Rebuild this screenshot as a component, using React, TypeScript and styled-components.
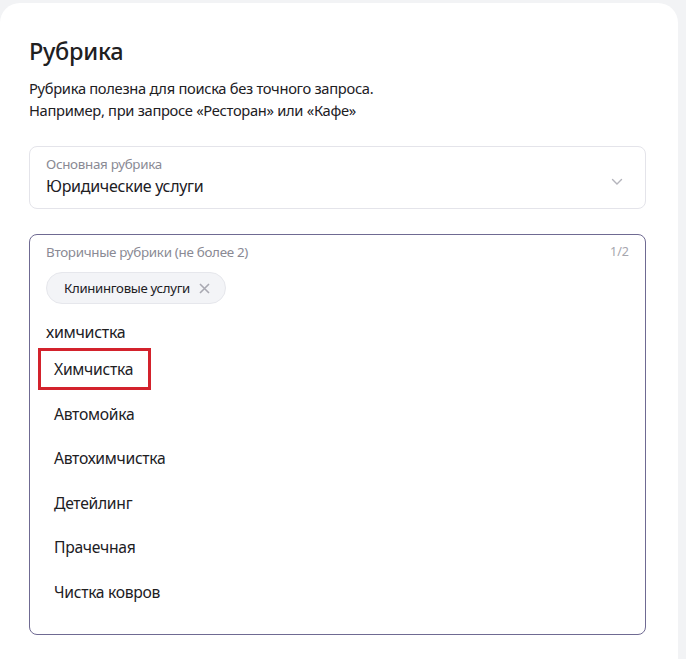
import styled, { createGlobalStyle } from "styled-components";

const GlobalStyle = createGlobalStyle`
  html, body {
    margin: 0;
    padding: 0;
    background: #f2f3f5;
  }
  body {
    font-family: "Noto Sans", "Liberation Sans", sans-serif;
    color: #21201f;
  }
`;

const categories = [
  "Химчистка",
  "Автомойка",
  "Автохимчистка",
  "Детейлинг",
  "Прачечная",
  "Чистка ковров",
];

const Card = styled.section`
  box-sizing: border-box;
  width: 678px;
  min-height: 680px;
  margin-top: 3px;
  background: #fff;
  border-radius: 20px;
  padding: 33px 32px 0 29px;
`;

const Title = styled.h2`
  margin: 0;
  font-size: 23.5px;
  line-height: 30px;
  font-weight: 500;
  letter-spacing: -0.3px;
`;

const Description = styled.p`
  margin: 11px 0 0;
  font-size: 14.7px;
  line-height: 22px;
  letter-spacing: -0.3px;
`;

const SelectBox = styled.div`
  box-sizing: border-box;
  margin-top: 25px;
  height: 63px;
  border: 1px solid #e4e4ea;
  border-radius: 8px;
  padding: 9px 22px 0 16px;
  display: flex;
  align-items: center;
  justify-content: space-between;
`;

const FieldText = styled.div`
  display: flex;
  flex-direction: column;
  align-self: flex-start;
`;

const Label = styled.span`
  font-size: 13.4px;
  line-height: 16px;
  color: #8a8a94;
  letter-spacing: -0.3px;
`;

const Value = styled.span`
  margin-top: 4px;
  font-size: 16px;
  line-height: 20px;
  letter-spacing: -0.3px;
`;

const MultiBox = styled.div`
  box-sizing: border-box;
  margin-top: 25px;
  height: 401px;
  border: 1px solid #6f6a92;
  border-radius: 8px;
  padding: 9px 16px 0 8px;
`;

const LabelRow = styled.div`
  display: flex;
  justify-content: space-between;
  padding-left: 8px;
`;

const Counter = styled.span`
  font-size: 12.5px;
  line-height: 16px;
  color: #a6a6ae;
`;

const Chip = styled.span`
  box-sizing: border-box;
  margin: 12px 0 0 8px;
  height: 32px;
  padding: 0 15px 0 17px;
  display: inline-flex;
  align-items: center;
  gap: 9px;
  background: #f3f4f7;
  border: 1px solid #e6e7ec;
  border-radius: 16px;
  font-size: 13.2px;
  letter-spacing: -0.3px;
`;

const Query = styled.div`
  margin: 18px 0 0 8px;
  font-size: 16px;
  line-height: 20px;
  letter-spacing: -0.3px;
`;

const Options = styled.ul`
  list-style: none;
  margin: 6px 0 0;
  padding: 0;
`;

const Option = styled.li<{ $marked?: boolean }>`
  box-sizing: border-box;
  width: ${(p) => (p.$marked ? "113px" : "auto")};
  height: ${(p) => (p.$marked ? "42px" : "44.5px")};
  line-height: ${(p) => (p.$marked ? "36px" : "44.5px")};
  margin: ${(p) => (p.$marked ? "1px 0 1.5px" : "0")};
  padding-left: ${(p) => (p.$marked ? "13px" : "16px")};
  font-size: 15.7px;
  letter-spacing: -0.3px;
  border: ${(p) => (p.$marked ? "3px solid #d3222c" : "none")};
`;

const Chevron = () => (
  <svg width="12" height="8" viewBox="0 0 12 8" fill="none">
    <path d="M1.5 1.5L6 6l4.5-4.5" stroke="#b4b4bc" strokeWidth="1.4" strokeLinecap="round" />
  </svg>
);

const Cross = () => (
  <svg width="11" height="11" viewBox="0 0 11 11" fill="none">
    <path d="M1 1l9 9M10 1l-9 9" stroke="#a9a9b2" strokeWidth="1.6" />
  </svg>
);

export default function App() {
  return (
    <>
      <GlobalStyle />
      <Card>
        <Title>Рубрика</Title>
        <Description>
          Рубрика полезна для поиска без точного запроса.
          <br />
          Например, при запросе «Ресторан» или «Кафе»
        </Description>
        <SelectBox>
          <FieldText>
            <Label>Основная рубрика</Label>
            <Value>Юридические услуги</Value>
          </FieldText>
          <Chevron />
        </SelectBox>
        <MultiBox>
          <LabelRow>
            <Label>Вторичные рубрики (не более 2)</Label>
            <Counter>1/2</Counter>
          </LabelRow>
          <Chip>
            Клининговые услуги
            <Cross />
          </Chip>
          <Query>химчистка</Query>
          <Options>
            {categories.map((c, i) => (
              <Option key={c} $marked={i === 0}>
                {c}
              </Option>
            ))}
          </Options>
        </MultiBox>
      </Card>
    </>
  );
}
